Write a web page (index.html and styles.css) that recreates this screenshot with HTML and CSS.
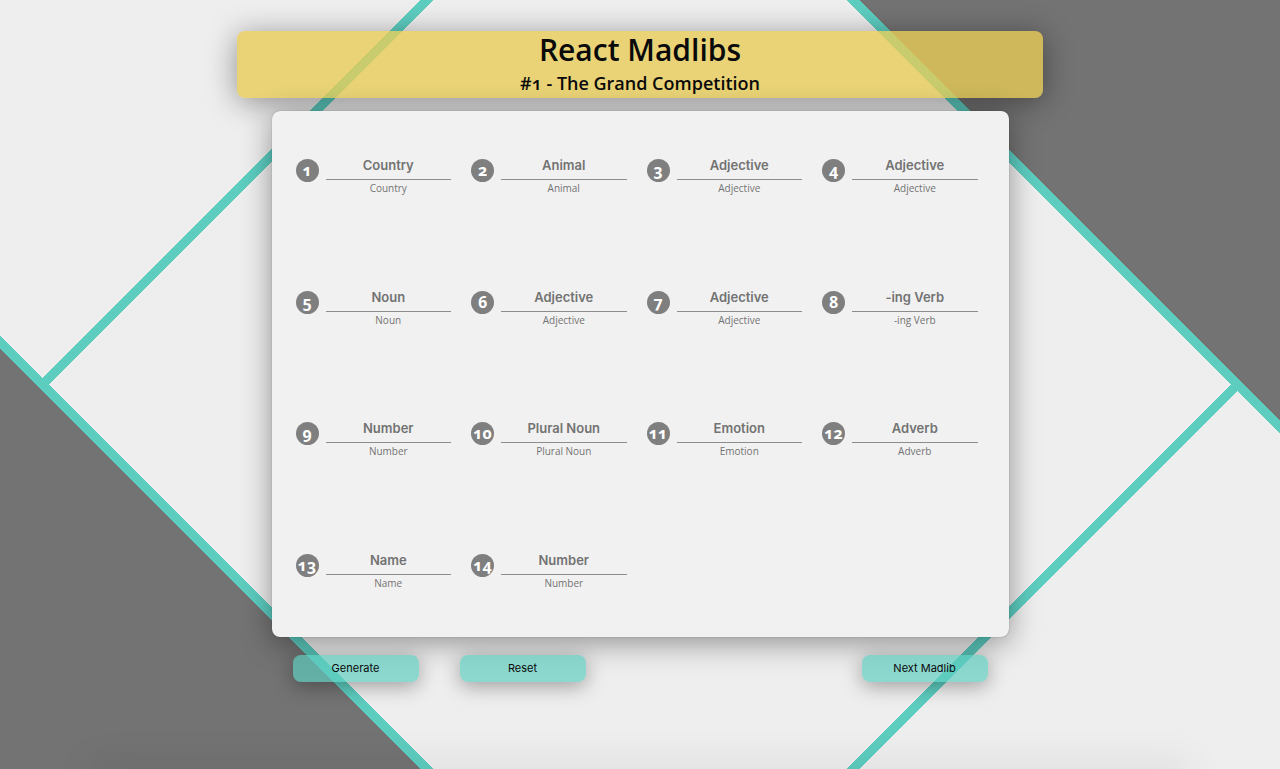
FILE: index.html
```html
<!DOCTYPE html>
<html lang="en">
<head>
<meta charset="utf-8">
<meta name="viewport" content="width=device-width, initial-scale=1">
<title>React Madlibs</title>
<link rel="stylesheet" href="styles.css">
</head>
<body>
<div class="app">
  <header class="header">
    <h1 class="title">React Madlibs</h1>
    <h2 class="subtitle">#1 - The Grand Competition</h2>
  </header>
  <form class="madlib">
    <div class="card">
      <div class="cell"><span class="badge">1</span><div class="field"><input class="word" id="w1" type="text" placeholder="Country"><label class="caption" for="w1">Country</label></div></div>
      <div class="cell"><span class="badge">2</span><div class="field"><input class="word" id="w2" type="text" placeholder="Animal"><label class="caption" for="w2">Animal</label></div></div>
      <div class="cell"><span class="badge">3</span><div class="field"><input class="word" id="w3" type="text" placeholder="Adjective"><label class="caption" for="w3">Adjective</label></div></div>
      <div class="cell"><span class="badge">4</span><div class="field"><input class="word" id="w4" type="text" placeholder="Adjective"><label class="caption" for="w4">Adjective</label></div></div>
      <div class="cell"><span class="badge">5</span><div class="field"><input class="word" id="w5" type="text" placeholder="Noun"><label class="caption" for="w5">Noun</label></div></div>
      <div class="cell"><span class="badge">6</span><div class="field"><input class="word" id="w6" type="text" placeholder="Adjective"><label class="caption" for="w6">Adjective</label></div></div>
      <div class="cell"><span class="badge">7</span><div class="field"><input class="word" id="w7" type="text" placeholder="Adjective"><label class="caption" for="w7">Adjective</label></div></div>
      <div class="cell"><span class="badge">8</span><div class="field"><input class="word" id="w8" type="text" placeholder="-ing Verb"><label class="caption" for="w8">-ing Verb</label></div></div>
      <div class="cell"><span class="badge">9</span><div class="field"><input class="word" id="w9" type="text" placeholder="Number"><label class="caption" for="w9">Number</label></div></div>
      <div class="cell"><span class="badge">10</span><div class="field"><input class="word" id="w10" type="text" placeholder="Plural Noun"><label class="caption" for="w10">Plural Noun</label></div></div>
      <div class="cell"><span class="badge">11</span><div class="field"><input class="word" id="w11" type="text" placeholder="Emotion"><label class="caption" for="w11">Emotion</label></div></div>
      <div class="cell"><span class="badge">12</span><div class="field"><input class="word" id="w12" type="text" placeholder="Adverb"><label class="caption" for="w12">Adverb</label></div></div>
      <div class="cell"><span class="badge">13</span><div class="field"><input class="word" id="w13" type="text" placeholder="Name"><label class="caption" for="w13">Name</label></div></div>
      <div class="cell"><span class="badge">14</span><div class="field"><input class="word" id="w14" type="text" placeholder="Number"><label class="caption" for="w14">Number</label></div></div>
    </div>
    <div class="actions">
      <button class="button" type="button">Generate</button>
      <button class="button" type="reset">Reset</button>
      <button class="button button-next" type="button">Next Madlib</button>
    </div>
  </form>
  <footer class="footer"></footer>
</div>
</body>
</html>
```
FILE: styles.css
```css
* {
  box-sizing: border-box;
}

body {
  margin: 0;
  font-family: "Open Sans", "Noto Sans", sans-serif;
  font-variant-numeric: oldstyle-nums;
  color: #0a0a0a;
}

.app {
  display: flex;
  flex-direction: column;
  align-items: center;
  min-height: 100vh;
  padding-top: 31px;
  overflow: hidden;
  background:
    linear-gradient(45deg, #737373 20.5%, #5dcdc0 20.5%, #5dcdc0 21.15%, transparent 21.15%, transparent 78.85%, #5dcdc0 78.85%, #5dcdc0 79.5%, #737373 79.5%),
    linear-gradient(135deg, #eee 20.5%, #5dcdc0 20.5%, #5dcdc0 21.15%, #eee 21.15%, #eee 78.85%, #5dcdc0 78.85%, #5dcdc0 79.5%, #eee 79.5%);
}

.header {
  width: 63%;
  padding-bottom: 1px;
  border-radius: 8px;
  background: rgba(232, 204, 84, 0.78);
  box-shadow: 0 4px 30px rgba(0, 0, 0, 0.4);
  text-align: center;
}

.title,
.subtitle {
  margin: 0;
  font-weight: 600;
}

.title {
  font-size: 30px;
  line-height: 38px;
}

.subtitle {
  font-size: 18px;
  line-height: 28px;
}

.madlib {
  width: 58%;
  max-width: 737px;
  margin-top: 13px;
}

.card {
  display: grid;
  grid-template-columns: repeat(4, 1fr);
  grid-auto-rows: 1fr;
  min-height: 526px;
  padding: 0 11px 0 24px;
  border-radius: 8px;
  background: #f1f1f1;
  box-shadow: 0 0 1px rgba(0, 0, 0, 0.5), 0 6px 30px rgba(0, 0, 0, 0.4);
}

.cell {
  display: flex;
  align-items: flex-start;
  gap: 7px;
  padding: 40px 20px 0 0;
}

.badge {
  flex: none;
  width: 23px;
  margin-top: 8px;
  border-radius: 50%;
  background: #7f7f7f;
  color: #fff;
  font-size: 16px;
  font-weight: 700;
  line-height: 23px;
  text-align: center;
}

.field {
  flex: 1;
  min-width: 0;
  text-align: center;
}

.word {
  display: block;
  width: 100%;
  height: 29px;
  padding: 0;
  border: 0;
  border-bottom: 1px solid #8c8c8c;
  background: transparent;
  font: 600 13px/28px Inter, sans-serif;
  text-align: center;
}

.word::placeholder {
  color: #737373;
  opacity: 1;
}

.caption {
  display: block;
  color: #737373;
  font-size: 10px;
  line-height: 16px;
}

.actions {
  display: flex;
  gap: 41px;
  padding: 18px 21px 0;
}

.button {
  width: 126px;
  height: 27px;
  padding: 0;
  border: 0;
  border-radius: 8px;
  background: rgba(93, 205, 192, 0.68);
  box-shadow: 0 4px 20px rgba(0, 0, 0, 0.35);
  color: #0a0a0a;
  font: 11px/27px Inter, sans-serif;
}

.button-next {
  margin-left: auto;
}

.footer {
  width: 85%;
  margin-top: auto;
  box-shadow: 0 6px 40px 8px rgba(0, 0, 0, 0.12);
}
```
